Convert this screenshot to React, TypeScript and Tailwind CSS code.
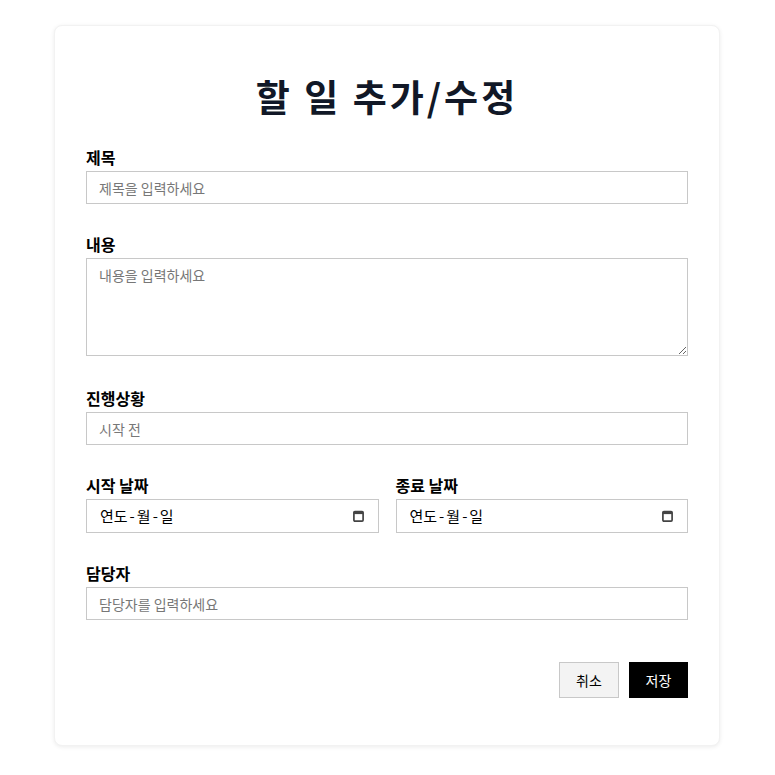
const font = { fontFamily: '"Noto Sans CJK KR", "Noto Sans", sans-serif' };

function Label({ children }: { children: React.ReactNode }) {
	return <label className="block text-[16px] leading-[22px] font-bold text-black mb-[3px]">{children}</label>;
}

function DateBox() {
	return (
		<div className="flex items-center justify-between h-[34px] border border-[#c8c8c8] pl-[13px] pr-[14px] text-[15px] text-black">
			<span className="flex items-center">
				<span>연도</span>
				<span className="px-[2px]">-</span>
				<span>월</span>
				<span className="px-[2px]">-</span>
				<span>일</span>
			</span>
			<svg width="11" height="12" viewBox="0 0 11 12" className="text-[#444]">
				<rect x="0.9" y="1.5" width="9.2" height="9.6" rx="1" fill="none" stroke="currentColor" strokeWidth="1.7" />
				<rect x="0.9" y="1.5" width="9.2" height="2.6" fill="currentColor" />
			</svg>
		</div>
	);
}

export default function App() {
	return (
		<div className="min-h-screen bg-white pt-[25px]" style={font}>
			<div className="ml-[54px] w-[666px] bg-white rounded-lg shadow-[0_1px_4px_rgba(0,0,0,0.08)] border border-[#f2f2f2] px-[31px] pt-[45px] pb-[47px]">
				<h1 className="text-center text-[37px] leading-[50px] font-bold text-[#111827] tracking-[3px] mb-[25px]">할 일 추가/수정</h1>

				<form className="flex flex-col gap-[29px]">
					<div>
						<Label>제목</Label>
						<input
							className="w-full h-[33px] border border-[#c8c8c8] px-[12px] text-[14px] placeholder:text-[#777] outline-none"
							placeholder="제목을 입력하세요"
						/>
					</div>

					<div className="mb-[2px]">
						<Label>내용</Label>
						<textarea
							className="block w-full h-[98px] border border-[#c8c8c8] px-[12px] py-[6px] text-[14px] placeholder:text-[#777] outline-none"
							placeholder="내용을 입력하세요"
						/>
					</div>

					<div>
						<Label>진행상황</Label>
						<input
							className="w-full h-[33px] border border-[#c8c8c8] px-[12px] text-[14px] placeholder:text-[#777] outline-none"
							placeholder="시작 전"
						/>
					</div>

					<div className="grid grid-cols-2 gap-[17px]">
						<div>
							<Label>시작 날짜</Label>
							<DateBox />
						</div>
						<div>
							<Label>종료 날짜</Label>
							<DateBox />
						</div>
					</div>

					<div>
						<Label>담당자</Label>
						<input
							className="w-full h-[33px] border border-[#c8c8c8] px-[12px] text-[14px] placeholder:text-[#777] outline-none"
							placeholder="담당자를 입력하세요"
						/>
					</div>

					<div className="flex justify-end gap-[10px] mt-[13px]">
						<button type="button" className="w-[60px] h-[36px] bg-[#f3f3f3] border border-[#c8c8c8] text-[14px] text-black">
							취소
						</button>
						<button type="button" className="w-[59px] h-[36px] bg-black text-white text-[14px]">
							저장
						</button>
					</div>
				</form>
			</div>
		</div>
	);
}
